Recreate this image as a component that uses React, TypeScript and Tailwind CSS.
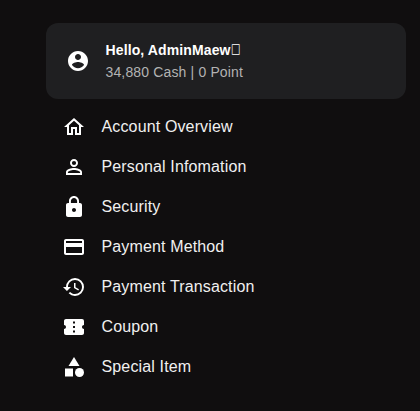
import {
    MdCategory,
    MdConfirmationNumber,
    MdHistory,
    MdLock,
    MdOutlineHome,
    MdPayment,
    MdPersonOutline,
} from "react-icons/md";

const menu = [
    { label: "Account Overview", icon: MdOutlineHome },
    { label: "Personal Infomation", icon: MdPersonOutline },
    { label: "Security", icon: MdLock },
    { label: "Payment Method", icon: MdPayment },
    { label: "Payment Transaction", icon: MdHistory },
    { label: "Coupon", icon: MdConfirmationNumber },
    { label: "Special Item", icon: MdCategory },
];

function AccountIcon() {
    return (
        <svg viewBox="0 0 24 24" fill="currentColor" className="size-6">
            <path d="M12 2C6.48 2 2 6.48 2 12s4.48 10 10 10 10-4.48 10-10S17.52 2 12 2zm0 3c1.66 0 3 1.34 3 3s-1.34 3-3 3-3-1.34-3-3 1.34-3 3-3zm0 14.2c-2.5 0-4.71-1.28-6-3.22.03-1.99 4-3.08 6-3.08 1.99 0 5.97 1.09 6 3.08-1.29 1.94-3.5 3.22-6 3.22z" />
        </svg>
    );
}

export default function App() {
    return (
        <div className="min-h-screen bg-[#100e0f] pt-[23px] pl-[46px] pr-3.5 text-white font-['Liberation_Sans',sans-serif]">
            <div className="flex h-[76px] items-center gap-[15.5px] rounded-xl bg-[#1f1f21] pl-5">
                <AccountIcon />
                <div>
                    <h1 className="flex items-center text-sm leading-[22px] font-bold tracking-[0.12px]">
                        Hello, AdminMaew
                        <span className="origin-left -translate-y-px scale-x-85 scale-y-110 font-['DejaVu_Sans',sans-serif] text-xs leading-[22px] font-normal">
                            □
                        </span>
                    </h1>
                    <p className="text-sm leading-[22px] tracking-[0.15px] text-[#b3b3b3]">34,880 Cash | 0 Point</p>
                </div>
            </div>
            <ul className="pt-2 pl-4">
                {menu.map((item) => (
                    <li key={item.label}>
                        <a href="#" className="flex h-10 items-center gap-[15.5px]">
                            <item.icon className="size-6" />
                            <span className="text-base tracking-[0.14px] text-[#f0f0f0]">{item.label}</span>
                        </a>
                    </li>
                ))}
            </ul>
        </div>
    );
}
